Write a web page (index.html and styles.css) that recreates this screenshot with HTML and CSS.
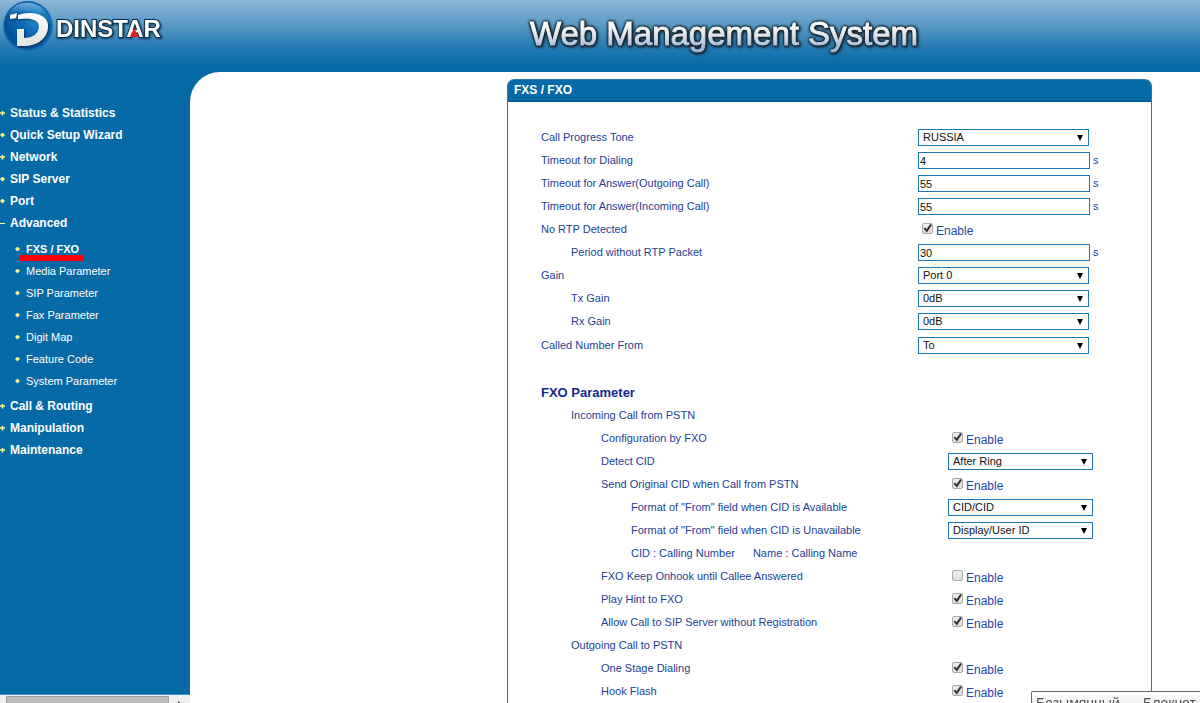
FILE: index.html
```html
<!DOCTYPE html>
<html lang="en">
<head>
<meta charset="utf-8">
<title>Web Management System</title>
<link rel="stylesheet" href="styles.css">
</head>
<body>
<header class="top">
  <svg class="logo" width="190" height="56" viewBox="0 0 190 56" role="img" aria-label="Dinstar">
    <defs>
      <radialGradient id="ball" cx=".65" cy=".35" r=".65">
        <stop offset="0" stop-color="#2690d0"/><stop offset=".55" stop-color="#0b67b0"/><stop offset="1" stop-color="#04509a"/>
      </radialGradient>
      <linearGradient id="gloss" x1="0" y1="0" x2="0" y2="1">
        <stop offset="0" stop-color="#a9d3ec" stop-opacity=".7"/><stop offset="1" stop-color="#2f8dca" stop-opacity=".1"/>
      </linearGradient>
      <linearGradient id="silver" x1="0" y1="0" x2="0" y2="1">
        <stop offset="0" stop-color="#ffffff"/><stop offset="1" stop-color="#dfe2e5"/>
      </linearGradient>
      <filter id="soft" x="-20%" y="-20%" width="150%" height="150%">
        <feDropShadow dx="1" dy="1" stdDeviation="1" flood-color="#01223f" flood-opacity=".8"/>
      </filter>
    </defs>
    <circle cx="28" cy="26" r="25" fill="#0a5aa2" opacity=".55"/>
    <circle cx="28" cy="25" r="24" fill="url(#ball)"/>
    <path d="M8 15C13 4 23 2 30 3c9 1 16 7 18 14-7-6-17-7-25-6-6 0-11 2-15 4z" fill="url(#gloss)"/>
    <path filter="url(#soft)" fill="url(#silver)" d="M10 15l7-2-1 5-6 1zM18 15c6-2 13-3 19-1 7 2 11 6 11 12 0 11-9 19-22 20h-9V29h7v9c9 0 14-4 15-11 0-5-3-7-8-8-4-1-8 0-13 0z"/>
    <text class="logo-text" x="56" y="37" filter="url(#soft)">DINSTAR</text>
    <path d="M134 28l5 9h-9z" fill="#e2231a"/>
  </svg>
  <h1 class="title">Web Management System</h1>
</header>
<div class="main">
  <div class="side">
    <nav class="nav">
      <ul class="menu">
        <li><a class="plus" href="#">Status &amp; Statistics</a></li>
        <li><a class="dot" href="#">Quick Setup Wizard</a></li>
        <li><a class="plus" href="#">Network</a></li>
        <li><a class="dot" href="#">SIP Server</a></li>
        <li><a class="dot" href="#">Port</a></li>
        <li><a class="minus" href="#">Advanced</a>
          <ul class="submenu">
            <li><a class="dot current" href="#">FXS / FXO</a></li>
            <li><a class="dot" href="#">Media Parameter</a></li>
            <li><a class="dot" href="#">SIP Parameter</a></li>
            <li><a class="dot" href="#">Fax Parameter</a></li>
            <li><a class="dot" href="#">Digit Map</a></li>
            <li><a class="dot" href="#">Feature Code</a></li>
            <li><a class="dot" href="#">System Parameter</a></li>
          </ul>
        </li>
        <li><a class="plus" href="#">Call &amp; Routing</a></li>
        <li><a class="plus" href="#">Manipulation</a></li>
        <li><a class="plus" href="#">Maintenance</a></li>
      </ul>
    </nav>
    <div class="scroll"><div class="thumb"></div><svg class="scroll-arrow" width="8" height="8" viewBox="0 0 8 8"><path d="M2 4l5 4H2z" fill="#444"/></svg></div>
  </div>
  <main class="content">
    <form class="panel">
      <h2 class="panel-head">FXS / FXO</h2>
      <div class="panel-body">
        <section class="group">
          <div class="row"><label for="tone">Call Progress Tone</label><div class="field"><span class="select"><select id="tone"><option>RUSSIA</option></select></span></div></div>
          <div class="row"><label for="dial">Timeout for Dialing</label><div class="field"><input class="text" id="dial" type="text" value="4"><span>s</span></div></div>
          <div class="row"><label for="out">Timeout for Answer(Outgoing Call)</label><div class="field"><input class="text" id="out" type="text" value="55"><span>s</span></div></div>
          <div class="row"><label for="inc">Timeout for Answer(Incoming Call)</label><div class="field"><input class="text" id="inc" type="text" value="55"><span>s</span></div></div>
          <div class="row"><span>No RTP Detected</span><div class="field"><input class="check" id="rtp" type="checkbox" checked><label class="enable" for="rtp">Enable</label></div></div>
          <div class="row"><label class="in1" for="period">Period without RTP Packet</label><div class="field"><input class="text" id="period" type="text" value="30"><span>s</span></div></div>
          <div class="row"><label for="gain">Gain</label><div class="field"><span class="select"><select id="gain"><option>Port 0</option></select></span></div></div>
          <div class="row"><label class="in1" for="tx">Tx Gain</label><div class="field"><span class="select"><select id="tx"><option>0dB</option></select></span></div></div>
          <div class="row"><label class="in1" for="rx">Rx Gain</label><div class="field"><span class="select"><select id="rx"><option>0dB</option></select></span></div></div>
          <div class="row"><label for="called">Called Number From</label><div class="field"><span class="select"><select id="called"><option>To</option></select></span></div></div>
        </section>
        <section class="group fxo">
          <h3 class="group-head">FXO Parameter</h3>
          <div class="row"><span class="in1">Incoming Call from PSTN</span></div>
          <div class="row"><span class="in2">Configuration by FXO</span><div class="field"><input class="check" id="conf" type="checkbox" checked><label class="enable" for="conf">Enable</label></div></div>
          <div class="row"><label class="in2" for="cid">Detect CID</label><div class="field"><span class="select"><select id="cid"><option>After Ring</option></select></span></div></div>
          <div class="row"><span class="in2">Send Original CID when Call from PSTN</span><div class="field"><input class="check" id="send" type="checkbox" checked><label class="enable" for="send">Enable</label></div></div>
          <div class="row"><label class="in3" for="avail">Format of "From" field when CID is Available</label><div class="field"><span class="select"><select id="avail"><option>CID/CID</option></select></span></div></div>
          <div class="row"><label class="in3" for="unavail">Format of "From" field when CID is Unavailable</label><div class="field"><span class="select"><select id="unavail"><option>Display/User ID</option></select></span></div></div>
          <div class="row"><span class="in3 legend"><span>CID : Calling Number</span><span>Name : Calling Name</span></span></div>
          <div class="row"><span class="in2">FXO Keep Onhook until Callee Answered</span><div class="field"><input class="check" id="keep" type="checkbox"><label class="enable" for="keep">Enable</label></div></div>
          <div class="row"><span class="in2">Play Hint to FXO</span><div class="field"><input class="check" id="hint" type="checkbox" checked><label class="enable" for="hint">Enable</label></div></div>
          <div class="row"><span class="in2">Allow Call to SIP Server without Registration</span><div class="field"><input class="check" id="allow" type="checkbox" checked><label class="enable" for="allow">Enable</label></div></div>
          <div class="row"><span class="in1">Outgoing Call to PSTN</span></div>
          <div class="row"><span class="in2">One Stage Dialing</span><div class="field"><input class="check" id="stage" type="checkbox" checked><label class="enable" for="stage">Enable</label></div></div>
          <div class="row"><span class="in2">Hook Flash</span><div class="field"><input class="check" id="flash" type="checkbox" checked><label class="enable" for="flash">Enable</label></div></div>
        </section>
      </div>
    </form>
  </main>
</div>
<div class="window-tip"><span>Безымянный —</span><span>Блокнот</span></div>
</body>
</html>
```
FILE: styles.css
```css
* { box-sizing: border-box; }

body {
  margin: 0;
  height: 100vh;
  overflow: hidden;
  display: flex;
  flex-direction: column;
  background: #066aa7;
  font: 11px/22px "Liberation Sans", Arial, sans-serif;
  color: #1c3f94;
}

h1, h2, h3, ul { margin: 0; padding: 0; }
ul { list-style: none; }

/* Header */
.top {
  flex: none;
  height: 72px;
  display: flex;
  background: linear-gradient(#8cb8d8 0, #5c9bc6 24px, #237ab2 48px, #066aa7 66px);
}
.logo { flex: none; }
.logo-text {
  font-size: 24px;
  font-weight: bold;
  fill: #fff;
  stroke: #0c2d48;
  stroke-width: 2px;
  paint-order: stroke;
}
.title {
  margin: auto;
  padding: 0 0 4px 58px;
  font-size: 33px;
  line-height: 40px;
  font-weight: normal;
  color: transparent;
  background: linear-gradient(#fff 10px, #e4e8ee 20px, #a3b7d2 34px);
  background-clip: text;
  -webkit-background-clip: text;
  -webkit-text-stroke: 1px transparent;
  filter: drop-shadow(0 0 1px #14242f) drop-shadow(0 0 1px #14242f) drop-shadow(1px 1px 1px #14242f);
}

/* Navigation */
.main { flex: 1; min-height: 0; display: flex; }
.side { flex: none; width: 190px; display: flex; flex-direction: column; }
.nav {
  flex: 1;
  min-height: 0;
  padding-top: 30px;
  border-bottom: 1px solid #3f92c8;
}
.menu a {
  display: flex;
  align-items: center;
  gap: 5px;
  color: #fff;
  font-size: 12px;
  font-weight: bold;
  text-decoration: none;
}
.menu a::before {
  content: "";
  flex: none;
  width: 5px;
  height: 5px;
  background: #f8f58c;
}
.menu a.plus::before { clip-path: polygon(0 34%, 34% 34%, 34% 0, 66% 0, 66% 34%, 100% 34%, 100% 66%, 66% 66%, 66% 100%, 34% 100%, 34% 66%, 0 66%); }
.menu a.dot::before { clip-path: polygon(50% 0, 100% 50%, 50% 100%, 0 50%); }
.menu a.minus::before { height: 1px; }
.submenu { padding: 4px 0 3px 15px; }
.submenu a { font-size: 11px; font-weight: normal; gap: 6px; }
.submenu a.current { position: relative; font-weight: bold; }
.submenu a.current::after {
  content: "";
  position: absolute;
  left: 5px;
  bottom: -1px;
  width: 64px;
  height: 6px;
  background: #f00;
}
.scroll {
  flex: none;
  height: 8px;
  display: flex;
  gap: 6px;
  padding: 1px 4px 0 6px;
  background: #f0f0f0;
}
.thumb { flex: 1; margin-right: 1px; background: #bdbdbd; border: 1px solid #a5a5a5; border-bottom: 0; }
.scroll-arrow { flex: none; margin: 1px 2px 0 0; }

/* Panel */
.content {
  flex: 1;
  min-width: 0;
  overflow: hidden;
  padding: 7px 48px 0 317px;
  background: #fff;
  border-top-left-radius: 30px;
}
.panel {
  border: 1px solid #2a7db2;
  border-radius: 7px 7px 0 0;
}
.panel-head {
  height: 22px;
  padding-left: 6px;
  border-radius: 5px 5px 0 0;
  background: #066aa7;
  border-bottom: 1px solid #05548a;
  color: #fff;
  font-size: 12px;
  line-height: 20px;
}
.panel-body { padding: 24px 0 0 33px; }
.row {
  display: grid;
  grid-template-columns: minmax(0, 377fr) minmax(0, 233fr);
  height: 23px;
  line-height: 23px;
  white-space: nowrap;
}
.fxo .row { grid-template-columns: minmax(0, 407fr) minmax(0, 203fr); }
.group .row:last-child { margin-top: 1px; }
.fxo .row:last-child { margin-top: 0; }
.in1 { padding-left: 30px; }
.in2 { padding-left: 60px; }
.in3 { padding-left: 90px; }
.legend { display: flex; gap: 18px; }
.fxo { padding-top: 24px; }
.group-head { color: #12298c; font-size: 13px; line-height: 23px; }

/* Controls */
.field { display: flex; align-items: center; gap: 3px; }
.text, .select select {
  height: 17px;
  margin: 0;
  border: 1px solid #1d78b5;
  border-radius: 0;
  background: #fff;
  color: #111;
  font: inherit;
  line-height: 15px;
}
.text { width: 172px; padding: 0 1px; }
.select { position: relative; display: flex; width: 171px; }
.fxo .select { width: 145px; }
.select select { appearance: none; width: 100%; padding: 0 20px 0 4px; }
.select::after {
  content: "";
  position: absolute;
  right: 6px;
  top: 6px;
  width: 6px;
  height: 6px;
  background: #000;
  clip-path: polygon(0 0, 100% 0, 50% 100%);
  pointer-events: none;
}
.check {
  appearance: none;
  flex: none;
  width: 11px;
  height: 11px;
  margin: 0 0 2px 4px;
  border: 1px solid #aaa;
  border-radius: 2px;
  background: linear-gradient(#eee, #dcdcdc);
}
.check:checked::after {
  content: "";
  display: block;
  width: 9px;
  height: 9px;
  background: #333;
  clip-path: polygon(6% 52%, 24% 38%, 40% 58%, 80% 0, 100% 12%, 44% 94%);
}
.enable { padding-top: 3px; font-size: 12px; line-height: 20px; color: #1f46a8; }

/* Clipped window label at the screen edge */
.window-tip {
  position: fixed;
  right: 0;
  bottom: 0;
  width: 169px;
  height: 12px;
  padding: 3px 4px 0;
  display: flex;
  justify-content: space-between;
  overflow: hidden;
  border: 1px solid #666;
  border-width: 1px 0 0 1px;
  border-top-left-radius: 2px;
  background: linear-gradient(#fff, #eef0f3);
  color: #555;
  font-size: 14px;
  line-height: 17px;
  white-space: nowrap;
}
```
